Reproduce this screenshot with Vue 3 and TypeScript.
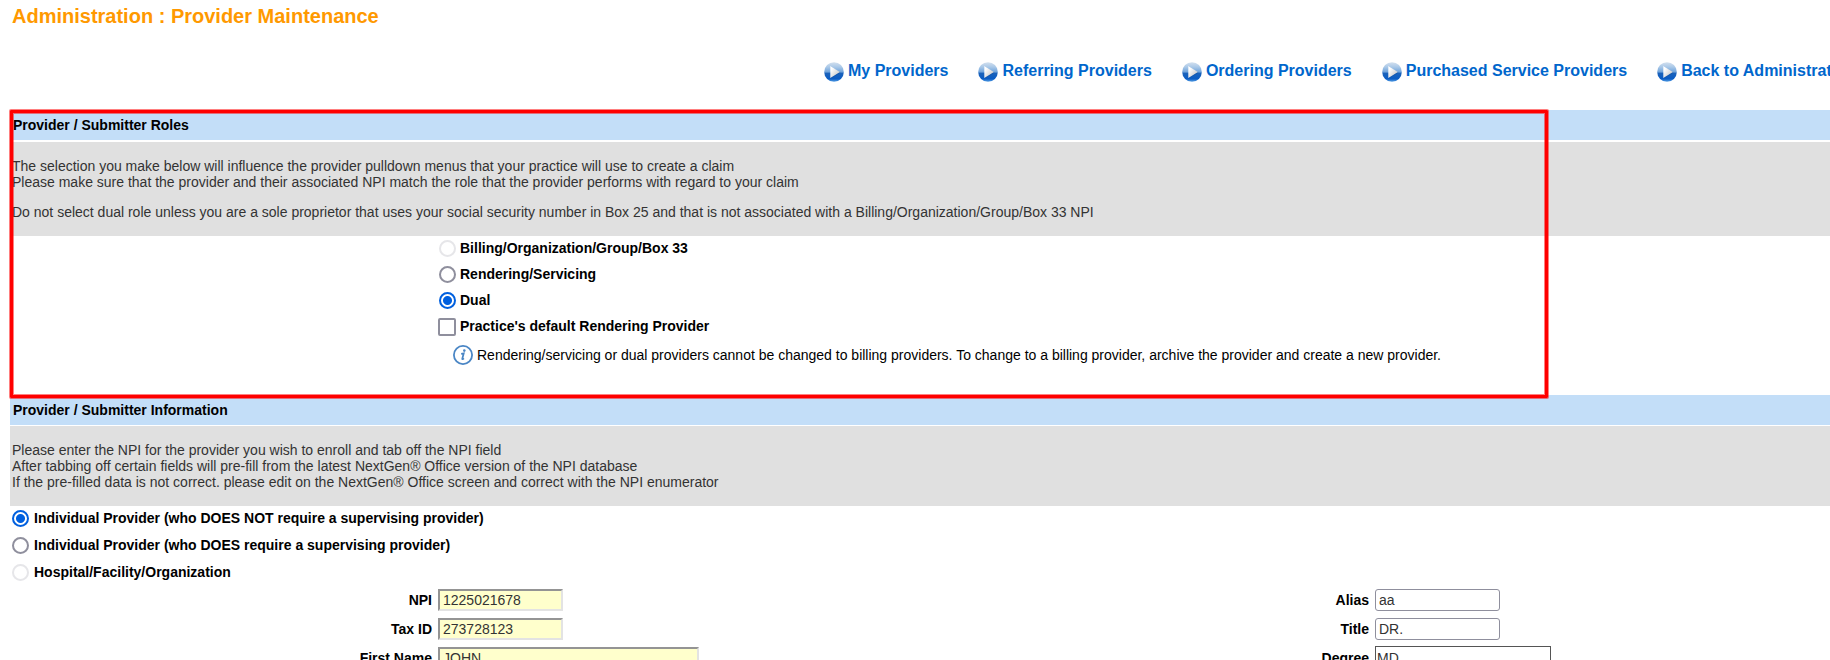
<script setup lang="ts">
import { ref } from 'vue'

interface Choice {
  id: string
  label: string
  disabled?: boolean
}

interface Field {
  id: string
  label: string
  value: string
  kind: 'required' | 'plain' | 'list'
  size: 'short' | 'medium' | 'long'
}

const links: string[] = [
  'My Providers',
  'Referring Providers',
  'Ordering Providers',
  'Purchased Service Providers',
  'Back to Administration',
]

const roles: Choice[] = [
  { id: 'billing', label: 'Billing/Organization/Group/Box 33', disabled: true },
  { id: 'rendering', label: 'Rendering/Servicing' },
  { id: 'dual', label: 'Dual' },
]

const kinds: Choice[] = [
  { id: 'unsupervised', label: 'Individual Provider (who DOES NOT require a supervising provider)' },
  { id: 'supervised', label: 'Individual Provider (who DOES require a supervising provider)' },
  { id: 'facility', label: 'Hospital/Facility/Organization', disabled: true },
]

const role = ref('dual')
const kind = ref('unsupervised')
const isDefault = ref(false)

const leftFields = ref<Field[]>([
  { id: 'npi', label: 'NPI', value: '1225021678', kind: 'required', size: 'short' },
  { id: 'tax', label: 'Tax ID', value: '273728123', kind: 'required', size: 'short' },
  { id: 'first', label: 'First Name', value: 'JOHN', kind: 'required', size: 'long' },
])

const rightFields = ref<Field[]>([
  { id: 'alias', label: 'Alias', value: 'aa', kind: 'plain', size: 'short' },
  { id: 'title', label: 'Title', value: 'DR.', kind: 'plain', size: 'short' },
  { id: 'degree', label: 'Degree', value: 'MD', kind: 'list', size: 'medium' },
])
</script>

<template>
  <main class="page">
    <h1 class="title">Administration : Provider Maintenance</h1>

    <svg class="defs" width="0" height="0" aria-hidden="true">
      <defs>
        <linearGradient id="ball" x1="0" y1="0" x2="0" y2="1">
          <stop offset="0" stop-color="#d3e0ee" />
          <stop offset="0.25" stop-color="#a9c8e8" />
          <stop offset="0.5" stop-color="#6fa3dc" />
          <stop offset="0.56" stop-color="#1b62ba" />
          <stop offset="0.85" stop-color="#0a5cc4" />
          <stop offset="1" stop-color="#5aa2e6" />
        </linearGradient>
        <linearGradient id="arrow" x1="0" y1="0" x2="1" y2="1">
          <stop offset="0.2" stop-color="#ffffff" />
          <stop offset="0.8" stop-color="#cccccc" />
        </linearGradient>
      </defs>
    </svg>

    <nav class="nav" aria-label="Providers">
      <a v-for="link in links" :key="link" class="nav-link" href="#">
        <svg class="nav-icon" viewBox="0 0 20 20" aria-hidden="true">
          <circle cx="10" cy="10" r="9.8" fill="url(#ball)" />
          <path d="M7 4.6v12l9.6-5.8z" fill="#0d4a94" opacity="0.3" />
          <path d="M6.3 4v12l9.6-6z" fill="url(#arrow)" />
        </svg>
        <span>{{ link }}</span>
      </a>
    </nav>

    <section class="section roles">
      <h2 class="bar">Provider / Submitter Roles</h2>
      <div class="note">
        <p>
          The selection you make below will influence the provider pulldown menus that your practice will use to create a claim<br />
          Please make sure that the provider and their associated NPI match the role that the provider performs with regard to your claim
        </p>
        <p>Do not select dual role unless you are a sole proprietor that uses your social security number in Box 25 and that is not associated with a Billing/Organization/Group/Box 33 NPI</p>
      </div>
      <div class="role-list">
        <label v-for="r in roles" :key="r.id" class="choice">
          <input v-model="role" class="radio" type="radio" name="role" :value="r.id" :disabled="r.disabled" />
          <span>{{ r.label }}</span>
        </label>
        <label class="choice">
          <input v-model="isDefault" class="check" type="checkbox" />
          <span>Practice's default Rendering Provider</span>
        </label>
        <p class="hint">
          <svg class="hint-icon" viewBox="0 0 20 20" aria-hidden="true">
            <circle cx="10" cy="10" r="9.1" fill="#fff" stroke="#4a86c5" stroke-width="1.8" />
            <circle cx="11.3" cy="5.6" r="1.3" fill="#4a86c5" />
            <path d="M8.2 8.9l2.5-.5-1.4 5.2c-.2.9.5.6 1.6-.3" fill="none" stroke="#4a86c5" stroke-width="1.8" />
          </svg>
          <span>Rendering/servicing or dual providers cannot be changed to billing providers. To change to a billing provider, archive the provider and create a new provider.</span>
        </p>
      </div>
      <div class="highlight" aria-hidden="true"></div>
    </section>

    <section class="section info">
      <h2 class="bar">Provider / Submitter Information</h2>
      <div class="note">
        <p>
          Please enter the NPI for the provider you wish to enroll and tab off the NPI field<br />
          After tabbing off certain fields will pre-fill from the latest NextGen® Office version of the NPI database<br />
          If the pre-filled data is not correct. please edit on the NextGen® Office screen and correct with the NPI enumerator
        </p>
      </div>
      <div class="kind-list">
        <label v-for="k in kinds" :key="k.id" class="choice">
          <input v-model="kind" class="radio" type="radio" name="kind" :value="k.id" :disabled="k.disabled" />
          <span>{{ k.label }}</span>
        </label>
      </div>
      <div class="columns">
        <div v-for="(group, i) in [leftFields, rightFields]" :key="i" class="fields">
          <div v-for="f in group" :key="f.id" class="field">
            <label class="field-label" :for="f.id">{{ f.label }}</label>
            <select v-if="f.kind === 'list'" :id="f.id" v-model="f.value" :class="['box', f.kind, f.size]">
              <option>MD</option>
            </select>
            <input v-else :id="f.id" v-model="f.value" type="text" :class="['box', f.kind, f.size]" />
          </div>
        </div>
      </div>
    </section>
  </main>
</template>

<style>
html {
  scrollbar-width: none;
}
body {
  margin: 0;
  background: #fff;
}
</style>

<style scoped>
.page {
  padding-left: 10px;
  overflow: hidden;
  font-family: "Liberation Sans", Arial, sans-serif;
  font-size: 14px;
  line-height: 16px;
  color: #000;
}
.title {
  margin: 0;
  padding: 4px 2px 0;
  font-size: 20px;
  line-height: 24px;
  color: #ff9900;
}
.defs {
  position: absolute;
}
.nav {
  display: flex;
  gap: 30px;
  margin: 34px 0 28px;
  padding-left: 814px;
  white-space: nowrap;
}
.nav-link {
  display: flex;
  flex: none;
  gap: 4px;
  font-size: 16px;
  line-height: 18px;
  font-weight: bold;
  color: #0066cc;
  text-decoration: none;
}
.nav-icon {
  width: 20px;
  height: 20px;
}
.section {
  position: relative;
}
/* Keeps the callout frame above the next section's bar */
.roles {
  z-index: 1;
}
.bar {
  margin: 0;
  padding: 7px 3px;
  font-size: 14px;
  line-height: 16px;
  background: #c3def8;
}
.note {
  margin-top: 2px;
  padding: 16px 2px;
  color: #333;
  background: #e0e0e0;
}
.note p {
  margin: 0;
}
.note p + p {
  margin-top: 14px;
}
.info .note {
  margin-top: 1px;
}
.role-list {
  padding: 0 0 29px 428px;
}
.choice {
  display: flex;
  align-items: flex-start;
  width: max-content;
  font-weight: bold;
}
.role-list .choice {
  gap: 4px;
  height: 22px;
  padding-top: 4px;
}
.kind-list {
  padding-left: 2px;
}
.kind-list .choice {
  gap: 5px;
  height: 23px;
  padding-top: 4px;
}
.radio,
.check {
  appearance: none;
  box-sizing: border-box;
  flex: none;
  margin: 0;
  border: 2px solid #8f8f9d;
  background: #fff;
}
.radio {
  width: 17px;
  height: 17px;
  border-radius: 50%;
}
.role-list .radio {
  margin-left: 1px;
}
.radio:checked {
  border-color: #0060df;
  background: radial-gradient(circle, #0060df 4px, #fff 5px);
}
.radio:disabled {
  border-color: #e6e6e9;
}
.check {
  width: 18px;
  height: 18px;
  border-radius: 2px;
}
.check:checked {
  background: #0060df;
}
.hint {
  display: flex;
  align-items: center;
  gap: 4px;
  height: 20px;
  margin: 0;
  padding: 5px 0 1px 15px;
}
.hint-icon {
  flex: none;
  width: 20px;
  height: 20px;
}
/* Callout frame laid over the roles section */
.highlight {
  position: absolute;
  top: 0;
  left: 0;
  bottom: -3px;
  box-sizing: border-box;
  width: 84.5%;
  border: 3px solid #ff0000;
  border-radius: 1px;
  box-shadow: 0 0 0 1px rgba(255, 0, 0, 0.5), inset 0 0 0 1px rgba(255, 0, 0, 0.5);
  pointer-events: none;
}
.columns {
  display: flex;
  padding-top: 2px;
}
.fields {
  display: flex;
  flex: none;
  flex-direction: column;
  gap: 7px;
  width: 937px;
}
.field {
  display: flex;
  align-items: center;
  gap: 6px;
  height: 22px;
}
.field-label {
  width: 422px;
  text-align: right;
  font-weight: bold;
}
.box {
  box-sizing: border-box;
  height: 22px;
  margin: 0;
  font-family: inherit;
  font-size: 14px;
  color: #333;
}
.required {
  padding: 0 3px;
  border: 2px solid;
  border-color: #949494 #e3e3e3 #e3e3e3 #949494;
  background: #ffffcc;
}
.plain {
  padding: 0 3px;
  border: 1px solid #8f8f9d;
  border-radius: 3px;
  background: #fff;
}
.list {
  appearance: none;
  height: 24px;
  padding: 0 1px;
  border: 1px solid #555;
  border-radius: 0;
  background: #fff;
}
.short {
  width: 125px;
}
.medium {
  width: 176px;
}
.long {
  width: 261px;
}
</style>
